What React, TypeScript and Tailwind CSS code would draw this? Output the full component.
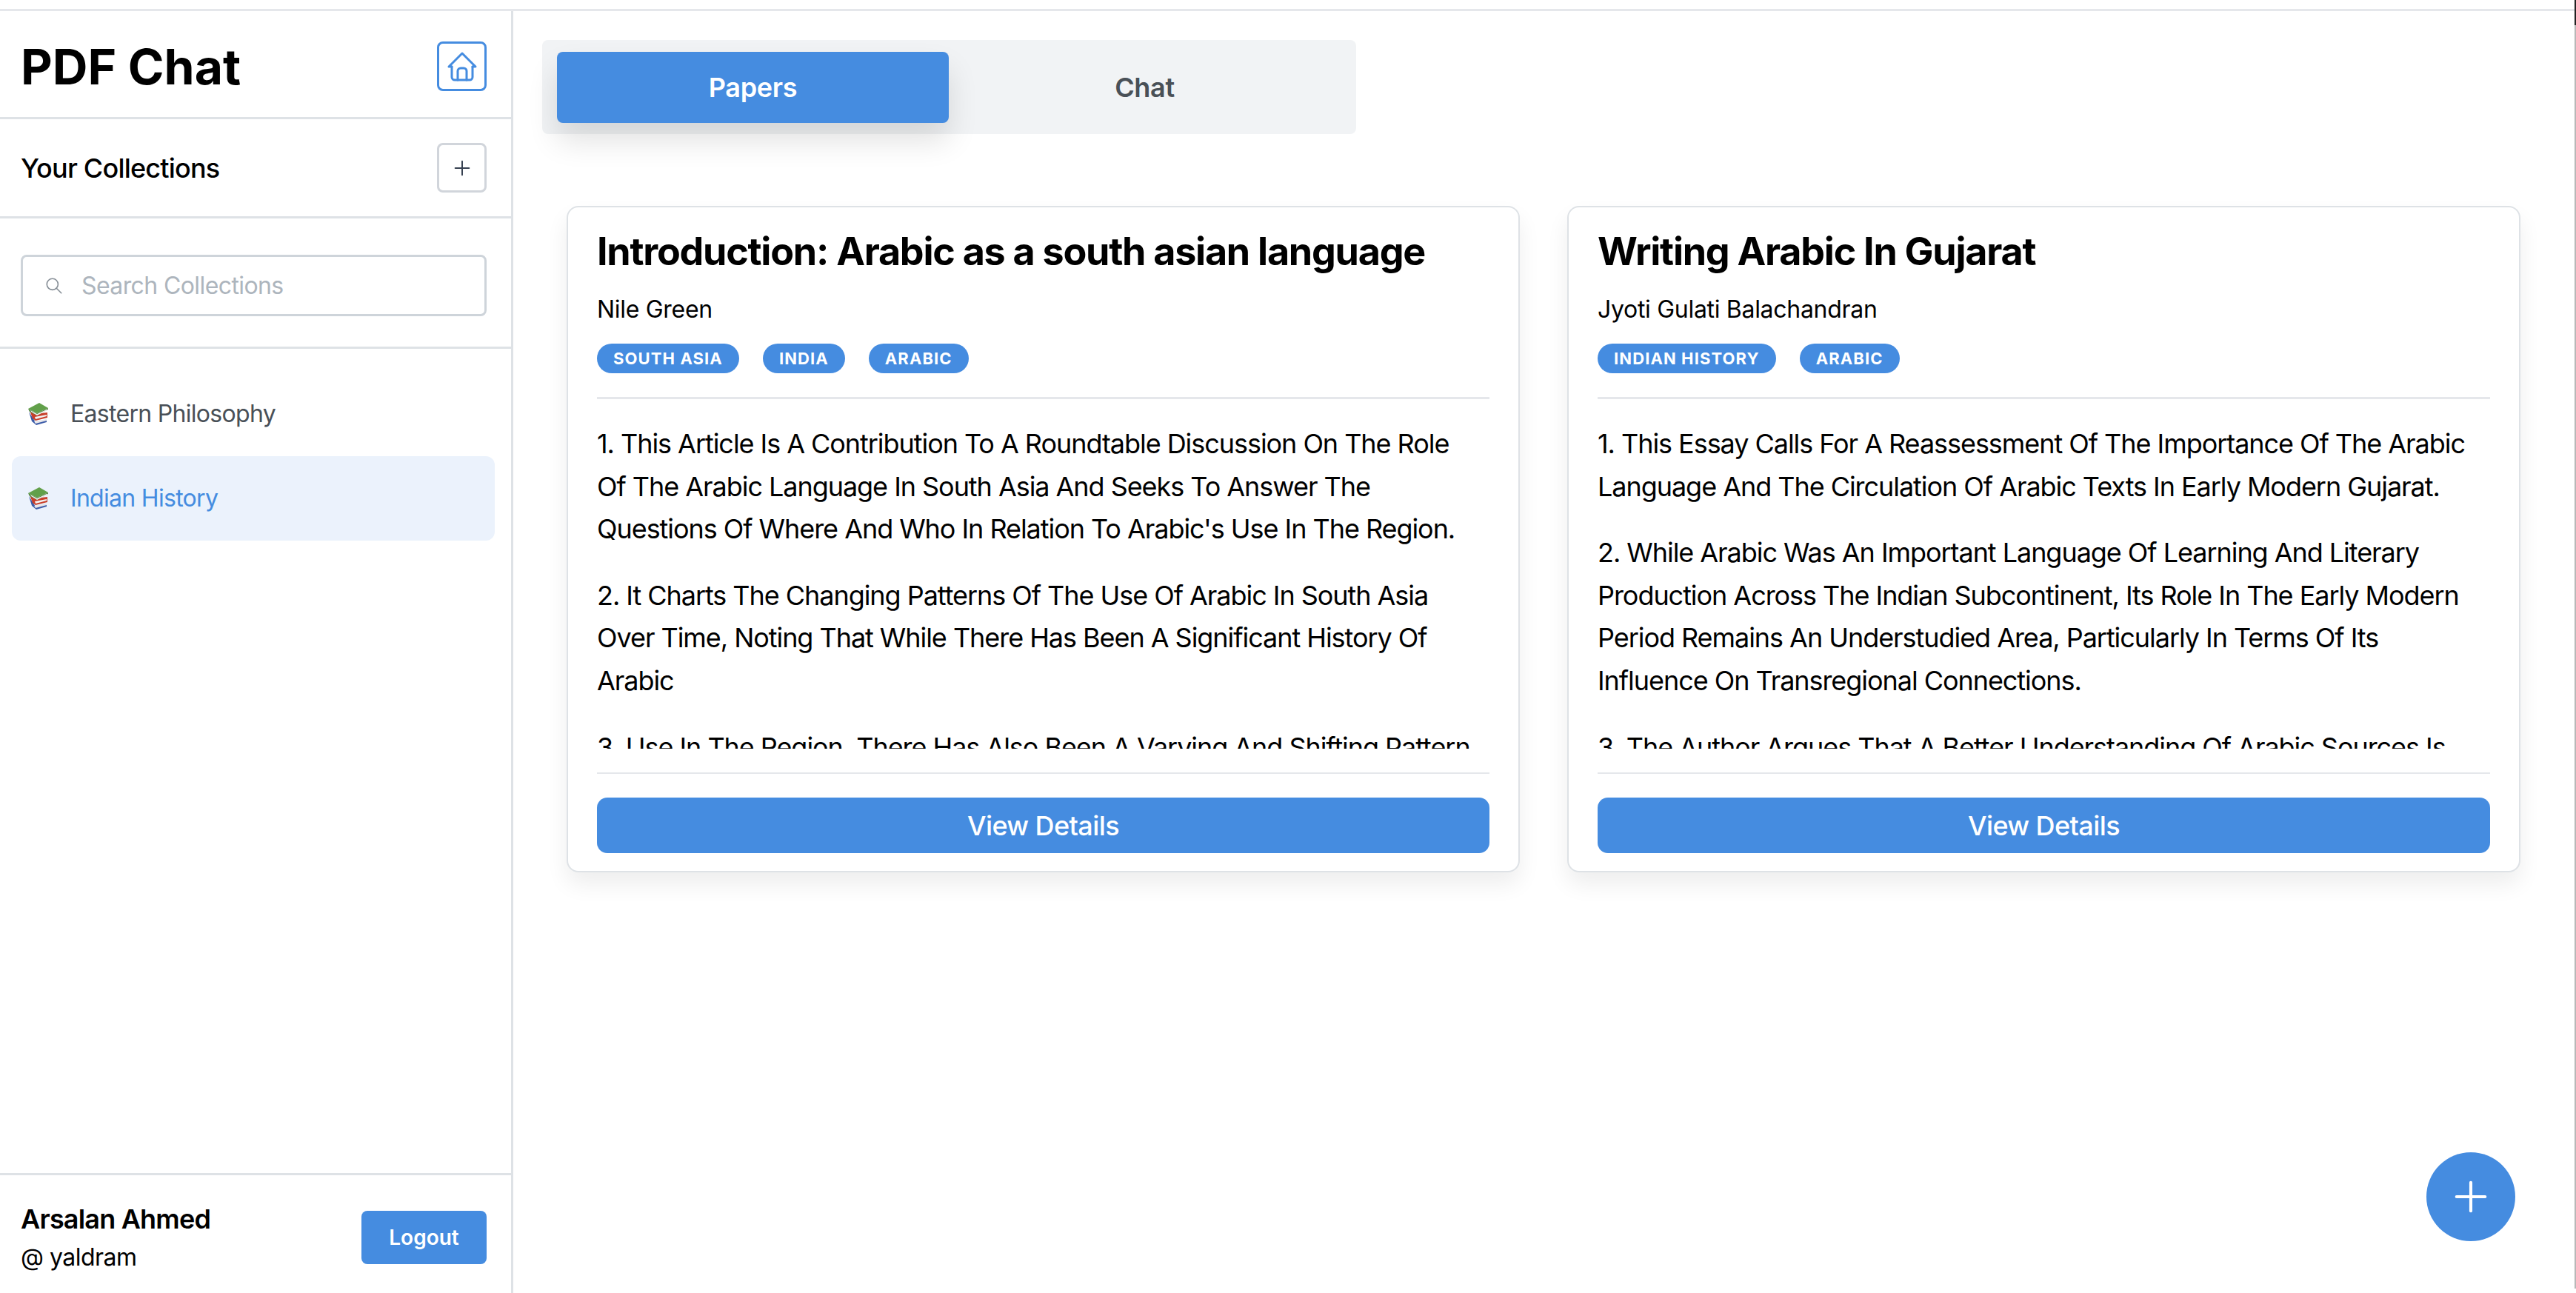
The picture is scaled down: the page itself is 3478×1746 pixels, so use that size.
const papers = [
  {
    title: 'Introduction: Arabic as a south asian language',
    author: 'Nile Green',
    tags: ['South Asia', 'India', 'Arabic'],
    points: [
      "1. This Article Is A Contribution To A Roundtable Discussion On The Role Of The Arabic Language In South Asia And Seeks To Answer The Questions Of Where And Who In Relation To Arabic's Use In The Region.",
      '2. It Charts The Changing Patterns Of The Use Of Arabic In South Asia Over Time, Noting That While There Has Been A Significant History Of Arabic',
      '3. Use In The Region, There Has Also Been A Varying And Shifting Pattern',
    ],
  },
  {
    title: 'Writing Arabic In Gujarat',
    author: 'Jyoti Gulati Balachandran',
    tags: ['Indian History', 'Arabic'],
    points: [
      '1. This Essay Calls For A Reassessment Of The Importance Of The Arabic Language And The Circulation Of Arabic Texts In Early Modern Gujarat.',
      '2. While Arabic Was An Important Language Of Learning And Literary Production Across The Indian Subcontinent, Its Role In The Early Modern Period Remains An Understudied Area, Particularly In Terms Of Its Influence On Transregional Connections.',
      '3. The Author Argues That A Better Understanding Of Arabic Sources Is',
    ],
  },
]

function PlusIcon({ className }: { className: string }) {
  return (
    <svg viewBox="0 0 24 24" fill="none" stroke="currentColor" strokeWidth="1.5" strokeLinecap="round" strokeLinejoin="round" className={className}>
      <path d="M12 5v14" />
      <path d="M5 12h14" />
    </svg>
  )
}

function HomeIcon() {
  return (
    <svg viewBox="0 0 24 24" fill="none" stroke="currentColor" strokeWidth="1.5" strokeLinecap="round" strokeLinejoin="round" className="h-[48px] w-[48px]">
      <path d="M5 12l-2 0l9 -9l9 9l-2 0" />
      <path d="M5 12v7a2 2 0 0 0 2 2h10a2 2 0 0 0 2 -2v-7" />
      <path d="M9 21v-6a2 2 0 0 1 2 -2h2a2 2 0 0 1 2 2v6" />
    </svg>
  )
}

function SearchIcon() {
  return (
    <svg viewBox="0 0 24 24" fill="none" stroke="currentColor" strokeWidth="1.5" strokeLinecap="round" strokeLinejoin="round" className="h-[26px] w-[26px] text-[#868e96]">
      <circle cx="10" cy="10" r="7" />
      <path d="M21 21l-6 -6" />
    </svg>
  )
}

// the stack-of-books emoji, no colour emoji font is installed
function Books() {
  return (
    <svg viewBox="0 0 28 30" className="h-[30px] w-[28px] shrink-0">
      <path d="M1 12L5 25L11 30L25 26L25 23L10 26Z" fill="#3d5ca8" />
      <path d="M8 25L25 22L25 24L10 28Z" fill="#e6e6ea" />
      <path d="M2 10L6 21L10 24L26 20L26 13L8 15Z" fill="#c93f2a" />
      <path d="M9 19L25 16L25 18L10 22Z" fill="#f2f2f2" />
      <path d="M0 8L12 14L27 7L27 9L12 17L2 12Z" fill="#4b7f38" />
      <path d="M3 10L12 15L26 8.500L26 10L12 17L4 12Z" fill="#efefef" />
      <path d="M0 8L15 0L27 7L12 14Z" fill="#62a04a" />
    </svg>
  )
}

function Tag({ label }: { label: string }) {
  return (
    <span className="flex h-[40px] items-center rounded-full bg-[#458ce0] px-[22px] text-[22px] font-bold uppercase tracking-[1.1px] text-white">
      {label}
    </span>
  )
}

function PaperCard({ paper }: { paper: (typeof papers)[number] }) {
  return (
    <div className="flex h-[900px] flex-col rounded-[16px] border-2 border-[#dee2e6] bg-white px-[39px] pt-[28px] shadow-[0_16px_30px_rgba(0,0,0,0.07)]">
      <h2 className="text-[52px] font-bold leading-[64px] tracking-[-1.25px] text-black">{paper.title}</h2>
      <p className="mt-[26px] text-[32px] leading-[40px] tracking-[-0.3px] text-black">{paper.author}</p>
      <div className="mt-[26px] flex gap-[32px]">
        {paper.tags.map((t) => (
          <Tag key={t} label={t} />
        ))}
      </div>
      <div className="mt-[32px] h-[3px] bg-[#e5e7eb]" />
      <div className="mt-[32px] h-[440px] overflow-hidden pr-[14px]">
        {paper.points.map((p) => (
          <p key={p} className="mb-[32px] text-[36px] leading-[57.6px] tracking-[-1.05px] text-black">
            {p}
          </p>
        ))}
      </div>
      <div className="mt-[32px] h-[2px] bg-[#e5e7eb]" />
      <button className="mt-[32px] h-[75px] rounded-[14px] bg-[#458ce0] text-[36px] font-medium tracking-[-0.6px] text-white">
        View Details
      </button>
    </div>
  )
}

export default function App() {
  return (
    <div className="relative flex h-[1746px] flex-col overflow-hidden bg-white font-['Inter','Liberation_Sans',sans-serif]">
      <div className="mt-[12px] h-[3px] shrink-0 bg-[#e5e7eb]" />
      <div className="flex min-h-0 flex-1">
        {/* Sidebar */}
        <aside className="flex w-[693px] shrink-0 flex-col border-r-[3px] border-[#dee2e6]">
          <div className="flex h-[146px] shrink-0 items-center justify-between border-b-[3px] border-[#dee2e6] pl-[28px] pr-[33px] pt-[6px]">
            <h1 className="text-[66px] font-bold leading-none text-black">PDF Chat</h1>
            <button className="flex h-[67px] w-[67px] items-center justify-center rounded-[8px] border-[3px] border-[#458ce0] text-[#458ce0]">
              <HomeIcon />
            </button>
          </div>
          <div className="flex h-[134px] shrink-0 items-center justify-between border-b-[3px] border-[#dee2e6] pl-[28px] pr-[33px]">
            <span className="text-[36px] font-medium tracking-[-0.8px] text-black">Your Collections</span>
            <button className="flex h-[67px] w-[67px] items-center justify-center rounded-[8px] border-[3px] border-[#d1d5db] text-[#374151]">
              <PlusIcon className="h-[32px] w-[32px]" />
            </button>
          </div>
          <div className="shrink-0 border-b-[3px] border-[#dee2e6] pb-[41px] pl-[28px] pr-[33px] pt-[49px]">
            <div className="flex h-[83px] items-center rounded-[8px] border-[3px] border-[#ced4da] pl-[29px]">
              <SearchIcon />
              <span className="ml-[24px] text-[32px] tracking-[-0.6px] text-[#adb5bd]">Search Collections</span>
            </div>
          </div>
          <nav className="min-h-0 flex-1 pl-[16px] pr-[22px] pt-[31px]">
            <div className="flex h-[114px] items-center gap-[29px] rounded-[12px] pl-[22px] text-[32px] tracking-[-0.7px] text-[#495057]">
              <Books />
              <span>Eastern Philosophy</span>
            </div>
            <div className="flex h-[114px] items-center gap-[29px] rounded-[12px] bg-[#ebf2fc] pl-[22px] text-[32px] tracking-[-0.7px] text-[#458ce0]">
              <Books />
              <span>Indian History</span>
            </div>
          </nav>
          <div className="flex h-[162px] shrink-0 items-center justify-between border-t-[3px] border-[#dee2e6] pl-[28px] pr-[33px]">
            <div className="pt-[10px]">
              <p className="text-[36px] font-semibold leading-[52px] tracking-[-0.8px] text-black">Arsalan Ahmed</p>
              <p className="text-[32px] leading-[52px] tracking-[-0.5px] text-black">@ yaldram</p>
            </div>
            <button className="mt-[8px] h-[72px] w-[169px] rounded-[8px] bg-[#458ce0] text-[28px] font-semibold text-white">
              Logout
            </button>
          </div>
        </aside>

        {/* Main */}
        <main className="min-w-0 flex-1 pl-[39px] pt-[39px]">
          <div className="flex h-[127px] w-[1099px] items-center rounded-[8px] bg-[#f1f3f5] pl-[20px]">
            <button className="h-[96px] w-[529px] rounded-[8px] bg-[#458ce0] text-[36px] font-semibold tracking-[-0.3px] text-white shadow-[0_24px_40px_rgba(0,0,0,0.12)]">
              Papers
            </button>
            <button className="h-[96px] w-[529px] text-[36px] font-semibold tracking-[-0.3px] text-[#495057]">Chat</button>
          </div>
          <div className="ml-[33px] mr-[75px] mt-[97px] grid grid-cols-2 gap-[64px]">
            {papers.map((p) => (
              <PaperCard key={p.title} paper={p} />
            ))}
          </div>
        </main>
      </div>

      <button className="absolute left-[3276px] top-[1556px] flex h-[120px] w-[120px] items-center justify-center rounded-full bg-[#458ce0] text-white">
        <PlusIcon className="h-[66px] w-[66px]" />
      </button>

      {/* edge of the captured window */}
      <div className="absolute right-0 top-0 h-[1740px] w-[2px] bg-[#b8b8b8]">
        <div className="h-[34px] bg-[#222222]" />
      </div>
    </div>
  )
}
